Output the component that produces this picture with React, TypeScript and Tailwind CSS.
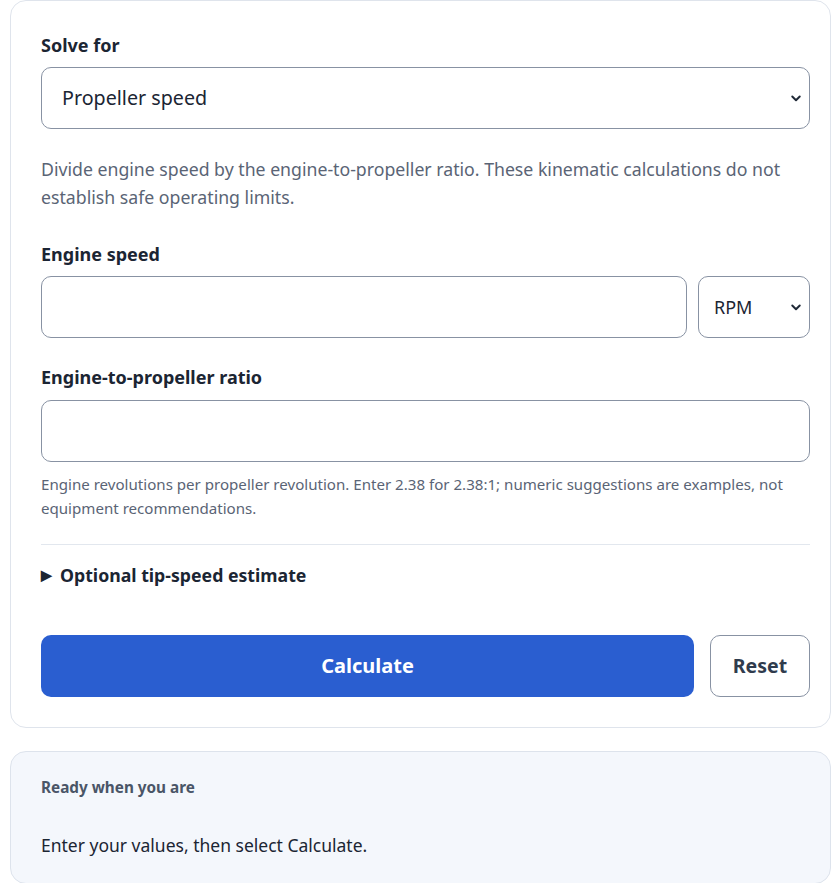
import React from 'react';

function Chevron() {
  return (
    <svg
      className="pointer-events-none absolute right-[8px] top-1/2 -translate-y-1/2"
      width="12"
      height="12"
      viewBox="0 0 16 16"
      fill="none"
    >
      <path d="M3 6l5 5 5-5" stroke="#1f2937" strokeWidth="2.6" strokeLinecap="round" strokeLinejoin="round" />
    </svg>
  );
}

export default function App() {
  return (
    <div
      className="min-h-screen bg-white pl-[10px] text-[#1b2533]"
      style={{ fontFamily: '"Noto Sans", "Open Sans", sans-serif' }}
    >
      {/* formulario */}
      <div className="w-[821px] rounded-[16px] border border-[#dfe4ec] bg-white pl-[30px] pr-[20px] pt-[31px] pb-[30px]">
        <label className="block text-[18px] font-bold leading-[26px]">Solve for</label>
        <div className="relative mt-[9px]">
          <select className="h-[62px] w-full appearance-none rounded-[10px] border border-[#8892a3] bg-white pl-[20px] text-[19.7px] text-[#1b2533] outline-none">
            <option>Propeller speed</option>
          </select>
          <Chevron />
        </div>

        <p className="mt-[26px] text-[17.7px] leading-[28px] text-[#5a6475]">
          Divide engine speed by the engine-to-propeller ratio. These kinematic calculations do not establish safe
          operating limits.
        </p>

        <label className="mt-[30px] block text-[18px] font-bold leading-[26px]">Engine speed</label>
        <div className="mt-[9px] flex gap-[11px]">
          <input className="h-[62px] flex-1 rounded-[10px] border border-[#8892a3] bg-white px-[16px] text-[18px] outline-none" />
          <div className="relative w-[112px]">
            <select className="h-[62px] w-full appearance-none rounded-[10px] border border-[#8892a3] bg-white pl-[15px] text-[18px] text-[#1b2533] outline-none">
              <option>RPM</option>
            </select>
            <Chevron />
          </div>
        </div>

        <label className="mt-[26px] block text-[18px] font-bold leading-[26px]">Engine-to-propeller ratio</label>
        <input className="mt-[10px] block h-[62px] w-full rounded-[10px] border border-[#8892a3] bg-white px-[16px] text-[18px] outline-none" />
        <p className="mt-[10px] text-[15.1px] leading-[24px] text-[#5a6475]">
          Engine revolutions per propeller revolution. Enter 2.38 for 2.38:1; numeric suggestions are examples, not
          equipment recommendations.
        </p>

        <div className="mt-[24px] border-t border-[#e2e7ee] pt-[16px]">
          <div className="flex items-center gap-[8px] text-[17.7px] font-bold leading-[28px]">
            <span className="text-[14px]">▶</span>
            <span>Optional tip-speed estimate</span>
          </div>
        </div>

        <div className="mt-[46px] flex gap-[16px]">
          <button className="h-[62px] flex-1 rounded-[10px] bg-[#2a5ed0] text-[20px] font-bold text-white">
            Calculate
          </button>
          <button className="h-[62px] w-[100px] rounded-[10px] border border-[#8892a3] bg-white text-[19.5px] font-bold text-[#2f3b4d]">
            Reset
          </button>
        </div>
      </div>

      {/* resultado */}
      <div className="mt-[23px] w-[821px] rounded-[16px] border border-[#dde3ec] bg-[#f4f7fc] pl-[30px] pr-[20px] pt-[23px] pb-[24px]">
        <p className="text-[15.3px] font-bold leading-[24px] text-[#4a5567]">Ready when you are</p>
        <p className="mt-[32px] text-[17.5px] leading-[28px] text-[#1b2533]">Enter your values, then select Calculate.</p>
      </div>
    </div>
  );
}
